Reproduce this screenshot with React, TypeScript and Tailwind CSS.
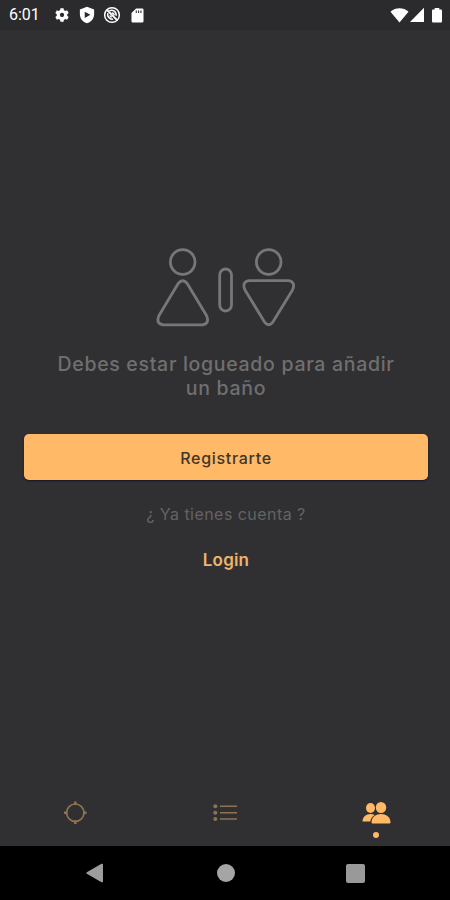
import type { ReactNode } from "react";

function StatusBar() {
  return (
    <header className="flex h-[30px] shrink-0 items-center justify-between bg-[#2b2b2d] text-white">
      <div className="flex items-center pl-[9px]">
        <span className="w-[46px] font-['Roboto',sans-serif] text-[16px] leading-none">
          6:01
        </span>
        {/* settings */}
        <svg className="-ml-px size-[16px]" viewBox="0 0 24 24" fill="currentColor">
          <path d="M19.8 13.3a8 8 0 0 0 0-2.6l2.2-1.7-2.3-4-2.7 1a8 8 0 0 0-2.2-1.3L14.4 2H9.6l-.4 2.7A8 8 0 0 0 7 6L4.3 5 2 9l2.2 1.7a8 8 0 0 0 0 2.6L2 15l2.3 4L7 18a8 8 0 0 0 2.200 1.300l.4 2.700h4.800l.4-2.700A8 8 0 0 0 17 18l2.700 1 2.300-4zM12 15.200a3.200 3.200 0 1 1 0-6.400 3.200 3.200 0 0 1 0 6.400z" />
        </svg>
        {/* play protect */}
        <svg className="ml-[8px] h-[18px] w-[18px]" viewBox="0 0 24 24" fill="currentColor">
          <path
            fillRule="evenodd"
            d="M12 1 2.500 4.500V11c0 5.800 4 10.500 9.500 12 5.500-1.500 9.500-6.200 9.500-12V4.500zM9 7.500l7.500 4.300L9 16z"
          />
        </svg>
        {/* radar off */}
        <svg
          className="ml-[7px] h-[18px] w-[18px]"
          viewBox="0 0 24 24"
          fill="none"
          stroke="currentColor"
          strokeWidth="2"
        >
          <circle cx="12" cy="12" r="9.800" />
          <path d="M5.500 5.500 18.500 18.500" strokeWidth="2.500" />
          <path d="M8.500 6.500c4-2.300 9.500.5 9 6.500M6.500 9.500c-1.500 4.500 2.500 8.800 7 8" />
          <path d="M11.500 9.500c2.200-.5 3.500 1 3.200 3M9.300 12.500c.2 1.500 1 2.200 2.500 2.300" />
        </svg>
        {/* sd card */}
        <svg className="ml-[8px] h-[17px] w-[17px]" viewBox="0 0 24 24" fill="currentColor">
          <path
            fillRule="evenodd"
            d="M10 2h8.500a2 2 0 0 1 2 2v16a2 2 0 0 1-2 2h-13a2 2 0 0 1-2-2V8.500zM9.500 5v3.500h1.500V5zm3.300 0v3.500h1.500V5zm3.300 0v3.500h1.500V5z"
          />
        </svg>
      </div>
      <svg className="mr-[7px] h-[17px] w-[53px]" viewBox="0 0 53 17" fill="currentColor">
        <path d="M.5 4.800C5.500.2 13.500.2 18.500 4.800L9.500 15.500z" />
        <path d="M34 .8V15H20z" />
        <path d="M43.300 2.500h1.400V1h4.600v1.500h1.400c.8 0 1.300.5 1.300 1.300v10.400c0 .8-.5 1.300-1.300 1.300h-7.400c-.8 0-1.300-.5-1.300-1.300V3.800c0-.8.5-1.300 1.300-1.300z" />
      </svg>
    </header>
  );
}

function RestroomIcon() {
  return (
    <svg
      className="h-[84px] w-[144px]"
      viewBox="154 245 144 84"
      fill="none"
      stroke="#777777"
      strokeWidth="2.800"
      strokeLinejoin="round"
    >
      <circle cx="182.700" cy="262" r="12.300" />
      <path d="M178.200 283.500 Q182.700 278 187.200 283.500 L206.500 315.500 Q210 323.500 202.500 324.800 H163 Q155.500 323.500 159 315.500 Z" />
      <rect x="219.700" y="269" width="11.800" height="42" rx="5.900" />
      <circle cx="268.700" cy="262" r="12.300" />
      <path d="M249 280.700 H288.500 Q296 282 292.500 290 L273.200 321.500 Q268.700 328 264.200 321.500 L245 290 Q241.500 282 249 280.700 Z" />
    </svg>
  );
}

function Tab({ children, active = false }: { children: ReactNode; active?: boolean }) {
  return (
    <button
      type="button"
      className={`flex h-full flex-1 flex-col items-center ${
        active ? "text-[#ffb967]" : "text-[#8d7354]"
      }`}
    >
      {children}
      {active && <span className="mt-[7px] size-[6px] rounded-full bg-[#ffb967]" />}
    </button>
  );
}

function TabBar() {
  return (
    <nav className="flex h-[46px] w-[451px] shrink-0">
      <Tab>
        <svg
          className="mt-[1px] size-[24px]"
          viewBox="0 0 24 24"
          fill="none"
          stroke="currentColor"
          strokeWidth="1.700"
        >
          <circle cx="12.300" cy="11.700" r="8.700" />
          <path d="M12.300.5v3.500M12.300 19.500V23M1 11.700h3.500M20 11.700h3.500" strokeWidth="2.600" />
        </svg>
      </Tab>
      <Tab>
        <svg className="mt-[1px] size-[24px]" viewBox="0 0 24 24" fill="currentColor">
          <circle cx="2.300" cy="5.300" r="2" />
          <circle cx="2.300" cy="11.700" r="2" />
          <circle cx="2.300" cy="18" r="2" />
          <path d="M7 4.500h17v1.600H7zM7 10.900h17v1.600H7zM7 17.200h17v1.600H7z" />
        </svg>
      </Tab>
      <Tab active>
        <svg className="mt-[1px] h-[24px] w-[30px]" viewBox="0 0 30 24" fill="currentColor">
          <ellipse cx="9.500" cy="7" rx="4.500" ry="5" />
          <path d="M1.500 20.500c0-4.500 3.500-7.500 8-7.500 1.600 0 3 .3 4.200 1-2.500 1.600-4 3.700-4.400 6.500z" />
          <ellipse cx="20" cy="6.500" rx="5.200" ry="5.500" />
          <path d="M10.500 21c.3-5.200 4.500-8 9.500-8s9.200 2.800 9.500 8c0 1-.5 1.500-1.500 1.500H12c-1 0-1.500-.5-1.500-1.500z" />
        </svg>
      </Tab>
    </nav>
  );
}

function SystemNav() {
  return (
    <footer className="flex h-[54px] shrink-0 items-center justify-between bg-black px-[85px] text-[#9d9d9d]">
      <svg className="size-[20px]" viewBox="0 0 20 20" fill="currentColor">
        <path d="M1.800 9.200 16.500.8q1.500-.6 1.500.9v16.600q0 1.500-1.500.9L1.800 10.800q-1.200-.8 0-1.600z" />
      </svg>
      <span className="size-[18px] rounded-full bg-[#a5a5a5]" />
      <span className="size-[19px] rounded-[2px] bg-[#999999]" />
    </footer>
  );
}

export default function App() {
  return (
    <div className="flex h-[900px] w-[450px] flex-col overflow-hidden bg-[#303032] font-['Inter',sans-serif]">
      <StatusBar />
      <main className="flex flex-1 flex-col items-center pt-[215px] pr-[22px] pl-[24px]">
        <RestroomIcon />
        <h1 className="mt-[23px] text-center text-[19.500px] leading-[24px] font-medium tracking-[0.690px] whitespace-nowrap text-[#6f6f70]">
          Debes estar logueado para añadir
          <br />
          un baño
        </h1>
        <button
          type="button"
          className="mt-[34px] h-[46px] w-full rounded-[5px] bg-[#ffb967] pt-[2px] text-[16px] font-medium tracking-[0.700px] text-[#40362a] shadow-[0_1px_2px_#15152a]"
        >
          Registrarte
        </button>
        <p className="mt-[22px] text-[16px] leading-[24px] tracking-[0.450px] text-[#636364]">
          ¿ Ya tienes cuenta ?
        </p>
        <a
          href="#login"
          className="mt-[22px] text-[17px] leading-[24px] font-semibold tracking-[0.200px] text-[#f0b36c]"
        >
          Login
        </a>
      </main>
      <TabBar />
      <SystemNav />
    </div>
  );
}
